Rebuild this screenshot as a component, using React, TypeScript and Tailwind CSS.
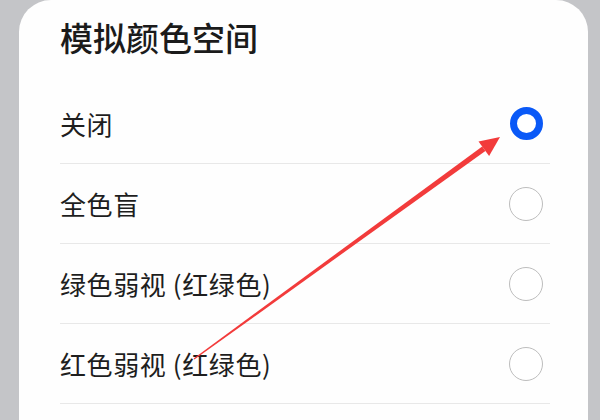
import React from 'react';

const options = [
  { label: '关闭', selected: true },
  { label: '全色盲', selected: false },
  { label: '绿色弱视 (红绿色)', selected: false },
  { label: '红色弱视 (红绿色)', selected: false },
];

const Radio: React.FC<{ selected: boolean }> = ({ selected }) =>
  selected ? (
    <div className="h-[33px] w-[33px] rounded-full border-[7px] border-[#0a59f7] bg-white" />
  ) : (
    <div className="h-[34px] w-[34px] rounded-full border-[1.5px] border-[#bdbdbd] bg-white" />
  );

export default function App() {
  return (
    <div
      className="relative h-[420px] w-[600px] overflow-hidden bg-[#c4c5c8]"
      style={{ fontFamily: '"Noto Sans CJK SC", "Noto Sans", sans-serif' }}
    >
      <div className="ml-[19px] mr-[12px] h-full rounded-t-[32px] bg-[#fefefe] pl-[41px] pr-[38px]">
        <h1 className="pt-[21px] pb-[30px] text-[33px] leading-[33px] font-medium text-[#1b1b1b]">
          模拟颜色空间
        </h1>
        {options.map(({ label, selected }) => (
          <div
            key={label}
            className="flex h-[80px] items-center justify-between border-b border-[#e8e8e8] pr-[7px]"
          >
            <span className="text-[26px] leading-[26px] tracking-[0.6px] text-[#1e1e1e]">{label}</span>
            <Radio selected={selected} />
          </div>
        ))}
      </div>

      {/* annotation arrow */}
      <svg className="pointer-events-none absolute left-0 top-0" width="600" height="420" viewBox="0 0 600 420">
        <polygon
          points="194.4,359.6 193.6,358.4 482.2,146.4 485.4,151.0"
          fill="#f23b3b"
        />
        <polygon points="500,137 489.1,156.0 478.5,141.4" fill="#f23b3b" />
      </svg>
    </div>
  );
}
